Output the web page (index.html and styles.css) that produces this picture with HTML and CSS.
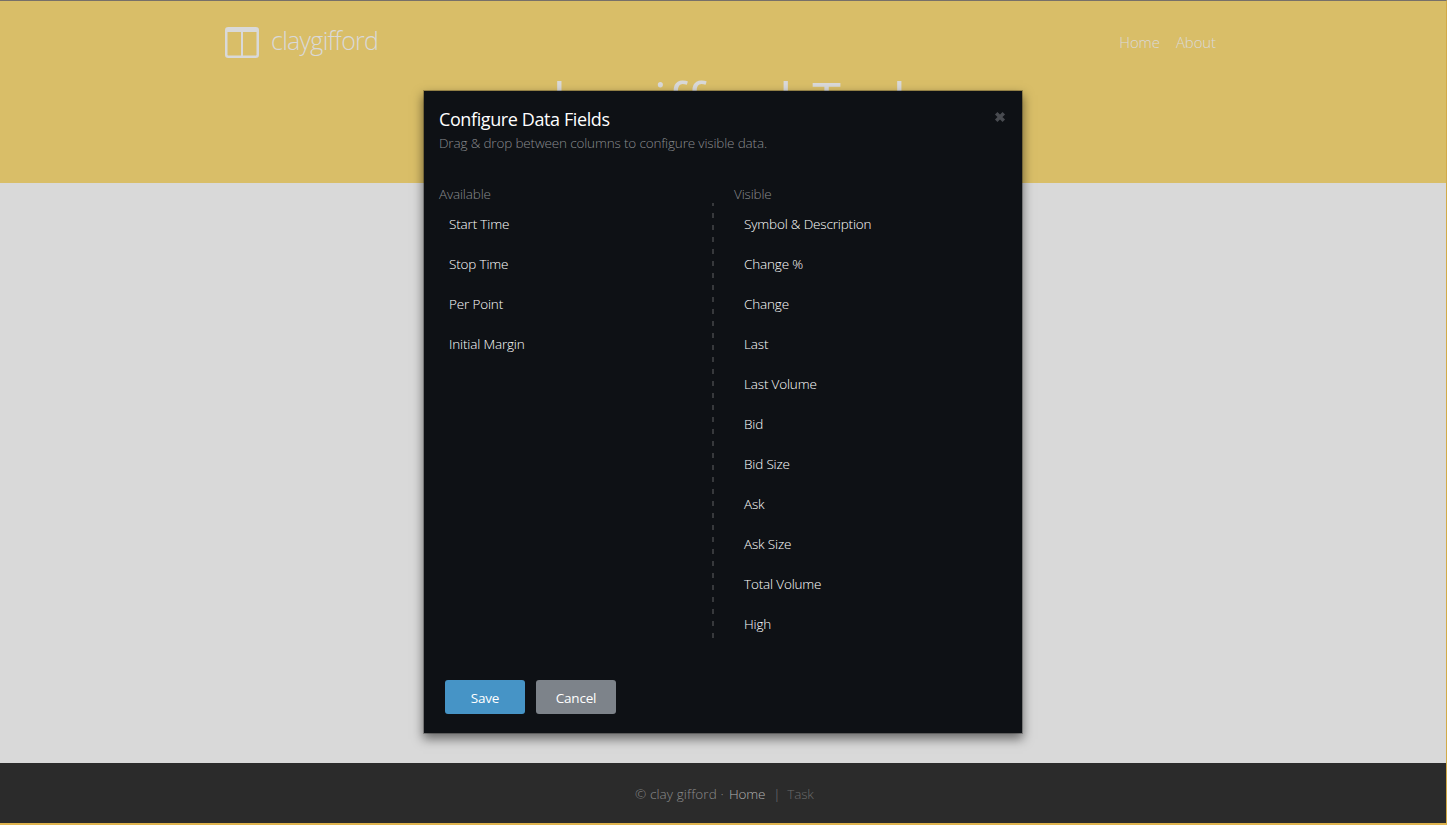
FILE: index.html
```html
<!DOCTYPE html>
<html lang="en">
<head>
<meta charset="utf-8">
<title>claygifford Task</title>
<link rel="stylesheet" href="styles.css">
</head>
<body>
<div class="page">
  <header class="masthead">
    <nav class="nav">
      <a class="brand">
        <svg class="brand-icon" width="34" height="31" viewBox="0 0 34 31"><rect x="1.25" y="1.25" width="31.5" height="28.5" rx="2" fill="none" stroke="currentColor" stroke-width="2.5"/><path d="M1 1h32v4H1z" fill="currentColor"/><path d="M17 4v26" stroke="currentColor" stroke-width="2"/></svg>
        <span class="brand-name">claygifford</span>
      </a>
      <div class="links"><a>Home</a><a>About</a></div>
    </nav>
    <h1 class="title">claygifford <span class="title-task">Task</span></h1>
  </header>
  <main class="content"></main>
  <footer class="footer"><span class="copy">© clay gifford ·</span><a class="foot-home">Home</a><span class="bar">|</span><span class="task">Task</span></footer>
</div>
<section class="modal" role="dialog">
  <div class="modal-head">
    <div>
      <h2 class="modal-title">Configure Data Fields</h2>
      <p class="modal-text">Drag &amp; drop between columns to configure visible data.</p>
    </div>
    <svg class="close" width="12" height="12" viewBox="0 0 12 12"><path d="M2.200 2.200l7.600 7.600M9.800 2.200l-7.600 7.600" stroke="currentColor" stroke-width="3.500"/></svg>
  </div>
  <div class="columns">
    <div class="column">
      <h3 class="column-title">Available</h3>
      <ul class="list">
        <li>Start Time</li><li>Stop Time</li><li>Per Point</li><li>Initial Margin</li>
      </ul>
    </div>
    <svg class="divider" width="2" height="438" viewBox="0 0 2 438"><path d="M1 1v437" stroke="#37393c" stroke-width="2" stroke-dasharray="5 7" stroke-dashoffset="2"/></svg>
    <div class="column column-visible">
      <h3 class="column-title">Visible</h3>
      <ul class="list">
        <li>Symbol &amp; Description</li><li>Change %</li><li>Change</li><li>Last</li><li>Last Volume</li><li>Bid</li><li>Bid Size</li><li>Ask</li><li>Ask Size</li><li>Total Volume</li><li>High</li>
      </ul>
    </div>
  </div>
  <div class="actions"><button class="button save">Save</button><button class="button cancel">Cancel</button></div>
</section>
</body>
</html>
```
FILE: styles.css
```css
* { box-sizing: border-box; }
body { margin: 0; font: 300 13.5px/20px "Open Sans", "Noto Sans", sans-serif; letter-spacing: -0.16px; }
h1, h2, h3, p, ul { margin: 0; padding: 0; font-weight: inherit; }
.page { height: 825px; display: flex; flex-direction: column; border-top: 1px solid #777069; border-right: 1px solid #d2aa48; border-bottom: 2px solid #dfb44f; }
.masthead { height: 182px; flex: none; background: #d9be68; color: #d9d9d9; overflow: hidden; }
.nav { display: flex; justify-content: space-between; padding: 26px 230px 0 225px; height: 64px; }
.brand { display: flex; }
.brand-name { margin-left: 12px; font-size: 25px; line-height: 26px; letter-spacing: -0.72px; }
.links { display: flex; gap: 16px; font-size: 15px; line-height: 30px; letter-spacing: -0.1px; }
.title { text-align: center; font-size: 52px; font-weight: 400; line-height: 70px; letter-spacing: 1.2px; word-spacing: 4px; }
.title-task { letter-spacing: -0.6px; }
.content { flex: 1; background: #d9d9d9; }
.footer { height: 60px; flex: none; background: #2b2b2b; color: #8c8c8c; display: flex; padding: 21px 0 0 635px; }
.copy { width: 94px; letter-spacing: 0.1px; white-space: nowrap; }
.foot-home { color: #b0b0b0; letter-spacing: -0.2px; }
.bar { color: #777; margin: 0 7px 0 8px; }
.task { color: #6a6a6a; }
.modal { position: absolute; left: 423px; top: 90px; width: 600px; height: 644px; border: 1px solid rgba(0, 0, 0, .25); background: #0e1115; background-clip: padding-box; box-shadow: 0 5px 10px rgba(0, 0, 0, .5); padding: 15px; display: flex; flex-direction: column; }
.modal-head { display: flex; justify-content: space-between; height: 78px; color: #898b8e; }
.modal-title { font-size: 18px; font-weight: 400; line-height: 27px; letter-spacing: -0.4px; color: #fff; }
.modal-text { line-height: 20px; }
.close { margin: 5px 1px 0 0; color: #484b50; }
.columns { display: grid; grid-template-columns: 273px 2px 1fr; height: 472px; }
.column-title { font-size: 13.5px; line-height: 20px; color: #898b8e; }
.column-visible { padding-left: 20px; }
.divider { margin-top: 18px; }
.list { list-style: none; color: #fff; }
.list li { height: 40px; line-height: 40px; padding-left: 10px; }
.actions { display: flex; gap: 11px; padding: 24px 0 0 6px; }
.button { width: 80px; height: 34px; border: 0; border-radius: 3px; padding: 2px 0 0; color: #fff; font: inherit; font-weight: 400; letter-spacing: -0.2px; }
.save { background: #4694c6; }
.cancel { background: #7d838a; }
```
